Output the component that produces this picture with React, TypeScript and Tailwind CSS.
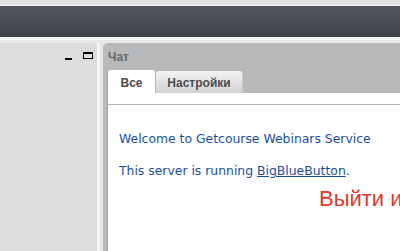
export default function App() {
  return (
    <div className="w-[400px] h-[251px] overflow-hidden flex flex-col bg-[#e9e9e9]">
      <div className="h-[5px] bg-[#e2e2e2]" />
      <div className="h-[1px] bg-[#f7f7f7]" />
      <div className="h-[31px] bg-gradient-to-b from-[#52555d] to-[#40434b]" />
      <div className="h-[3px] bg-[#f6f6f6]" />
      <div className="h-[3px] bg-[#e8e8e8]" />

      <div className="flex flex-1 min-h-0">
        {/* left panel */}
        <div className="w-[97px] shrink-0 bg-[#dcdddf] rounded-tr-[5px] relative">
          <div className="absolute left-[65px] top-[15px] w-[7px] h-[2px] bg-black" />
          <div className="absolute left-[83px] top-[9px] w-[10px] h-[7px] border border-black border-t-2" />
        </div>
        <div className="w-[3px] shrink-0 bg-[#f3f3f3]" />
        <div className="w-[3px] shrink-0 bg-[#e3e3e3]" />

        {/* chat panel */}
        <div className="flex-1 min-w-0 overflow-hidden bg-[#b8b9ba] rounded-tl-[5px] pl-[4px] flex flex-col font-['DejaVu_Sans',sans-serif]">
          <div className="h-[27px] pl-[1px] pt-[7px] text-[12px] font-bold leading-[14px] text-[#6a6a6a] font-['Liberation_Sans',sans-serif]">
            Чат
          </div>
          <div className="h-[23px] flex items-end gap-[1px] font-['Liberation_Sans',sans-serif] text-[12px] font-bold text-[#4d4d4d]">
            <div className="w-[48px] h-[23px] bg-white rounded-t-[3px] border-l border-[#a0a0a0] flex items-center justify-center pt-[2px]">
              Все
            </div>
            <div className="w-[87px] h-[22px] rounded-t-[3px] bg-gradient-to-b from-[#f4f4f4] to-[#d2d2d2] border-r border-[#c9c9c9] flex items-center justify-center pt-[1px]">
              Настройки
            </div>
          </div>
          <div className="flex-1 bg-white border-l border-[#9f9f9f] flex flex-col">
            <div className="h-[11px]" />
            <div className="flex-1 border-t border-[#b5b5b5] pl-[11px] pt-[26px] text-[12.4px] leading-[15px] text-[#1a4f9f]">
              <div className="whitespace-nowrap">Welcome to Getcourse Webinars Service</div>
              <div className="mt-[17px] whitespace-nowrap">
                This server is running <span className="underline">BigBlueButton</span>.
              </div>
              <div className="mt-[8px] pl-[200px] whitespace-nowrap font-['Liberation_Sans',sans-serif] text-[22px] leading-[25px] text-[#e3382c]">
                Выйти из конференции
              </div>
            </div>
          </div>
        </div>
      </div>
    </div>
  );
}
